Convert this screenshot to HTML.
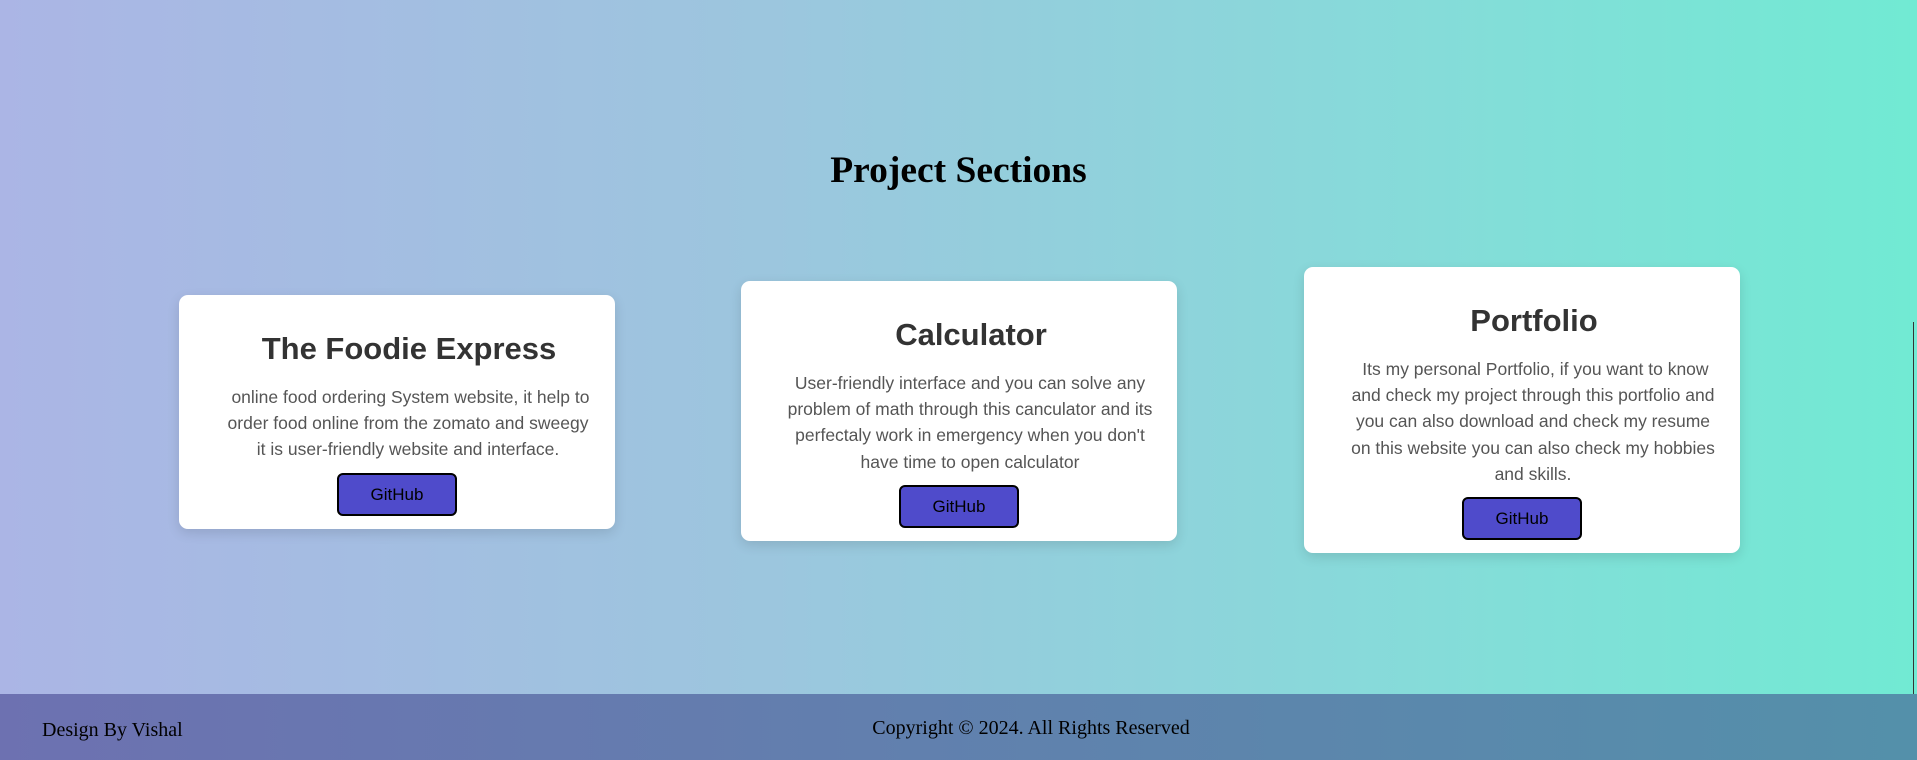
<!DOCTYPE html>
<html><head><meta charset="utf-8"><style>
*{margin:0;padding:0;box-sizing:border-box}
html,body{width:1917px;height:760px;overflow:hidden}
body{background:linear-gradient(90deg,#abb5e5,#9cc6de 40%,#85dcd9 75%,#71ead3);position:relative;font-family:"Liberation Sans",Arial,sans-serif}
h1{position:absolute;top:149px;left:0;width:1917px;text-align:center;font-family:"Liberation Serif",serif;font-size:37.5px;font-weight:bold;color:#000}
.card{position:absolute;width:436px;background:#fff;border-radius:9px;box-shadow:0 4px 12px rgba(0,0,0,.12);padding:35px 20px 13px;text-align:center}
.card h2{font-size:31px;line-height:37px;color:#333;font-weight:bold;margin-bottom:17px;padding-left:24px}
.card p{font-size:17.5px;line-height:26.2px;color:#555;margin-bottom:10px;padding-left:22px;white-space:nowrap}
.btn{display:inline-block;width:120px;height:43px;line-height:39px;background:#4f4bcb;border:2px solid #000;border-radius:6px;font-size:17px;color:#000}
footer{position:absolute;left:0;top:694px;width:1917px;height:66px;background:linear-gradient(90deg,#6d71b1,#5490aa);font-family:"Liberation Serif",serif;font-size:20px;color:#000}
.l{position:absolute;left:42px;top:25px}
.c{position:absolute;left:0;width:1917px;text-align:center;top:23px;padding-left:145px}
.sb{position:absolute;left:1913px;top:322px;width:1px;height:372px;background:#333}
</style></head><body>
<h1>Project Sections</h1>
<div class="card" style="left:179px;top:295px"><h2>The Foodie Express</h2><p>&nbsp;online food ordering System website, it help to<br>order food online from the zomato and sweegy<br>it is user-friendly website and interface.</p><span class="btn">GitHub</span></div>
<div class="card" style="left:741px;top:281px"><h2>Calculator</h2><p>User-friendly interface and you can solve any<br>problem of math through this canculator and its<br>perfectaly work in emergency when you don't<br>have time to open calculator</p><span class="btn">GitHub</span></div>
<div class="card" style="left:1304px;top:267px"><h2>Portfolio</h2><p>&nbsp;Its my personal Portfolio, if you want to know<br>and check my project through this portfolio and<br>you can also download and check my resume<br>on this website you can also check my hobbies<br>and skills.</p><span class="btn">GitHub</span></div>
<div class="sb"></div>
<footer><div class="l">Design By Vishal</div><div class="c">Copyright © 2024. All Rights Reserved</div></footer>
</body></html>
